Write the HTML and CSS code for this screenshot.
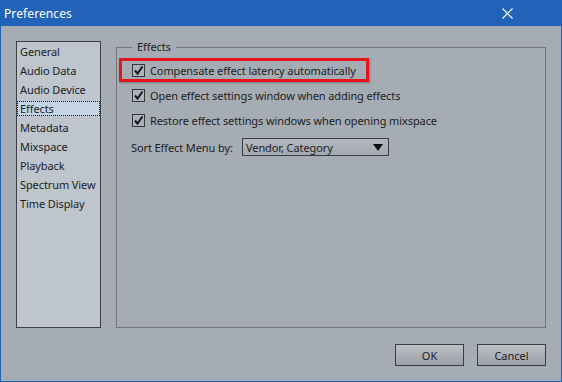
FILE: index.html
```html
<!DOCTYPE html>
<html lang="en">
<head>
  <meta charset="UTF-8" />
  <title>Preferences</title>
  <link rel="stylesheet" href="styles.css">
</head>
<body>
  <div class="window">
    <!-- Title bar -->
    <div class="titlebar">
      <span class="title">Preferences</span>
      <svg class="close" width="11" height="11" viewBox="0 0 11 11">
        <path d="M0.5 0.5 L10.5 10.5 M10.5 0.5 L0.5 10.5" stroke="#fff" stroke-width="1.2" fill="none" />
      </svg>
    </div>

    <div class="dialog">
      <div class="panes">
        <!-- Page list -->
        <ul class="page-list">
          <li>General</li>
          <li>Audio Data</li>
          <li>Audio Device</li>
          <li class="selected">Effects</li>
          <li>Metadata</li>
          <li>Mixspace</li>
          <li>Playback</li>
          <li>Spectrum View</li>
          <li>Time Display</li>
        </ul>

        <!-- Effects group -->
        <fieldset class="group">
          <legend>Effects</legend>
          <div class="options">
            <label class="option">
              <span class="check"><svg width="11" height="11" viewBox="0 0 11 11"><path d="M2 5.5 L4.5 8.5 L9.5 1.5" stroke="#15171b" stroke-width="2" fill="none" /></svg></span>
              Compensate effect latency automatically
              <span class="highlight"></span>
            </label>
            <label class="option">
              <span class="check"><svg width="11" height="11" viewBox="0 0 11 11"><path d="M2 5.5 L4.5 8.5 L9.5 1.5" stroke="#15171b" stroke-width="2" fill="none" /></svg></span>
              Open effect settings window when adding effects
            </label>
            <label class="option">
              <span class="check"><svg width="11" height="11" viewBox="0 0 11 11"><path d="M2 5.5 L4.5 8.5 L9.5 1.5" stroke="#15171b" stroke-width="2" fill="none" /></svg></span>
              Restore effect settings windows when opening mixspace
            </label>
          </div>
          <div class="sort-row">
            <span class="sort-label">Sort Effect Menu by:</span>
            <div class="select">
              <span>Vendor, Category</span>
              <svg width="10" height="7" viewBox="0 0 10 7"><path d="M0 0 H10 L5 7 Z" fill="#0d0f12" /></svg>
            </div>
          </div>
        </fieldset>
      </div>

      <!-- Dialog buttons -->
      <div class="buttons">
        <button class="btn">OK</button>
        <button class="btn">Cancel</button>
      </div>
    </div>
  </div>
</body>
</html>
```

FILE: styles.css
```css
body {
  margin: 0;
  font-family: 'Noto Sans', 'DejaVu Sans', sans-serif;
  font-size: 11px;
  letter-spacing: -0.1px;
  color: #1c1d24;
}

/* Window frame */
.window {
  width: 562px;
  height: 382px;
  background: #2163b8;
  display: flex;
  flex-direction: column;
}

.titlebar {
  height: 26px;
  display: flex;
  align-items: center;
  justify-content: space-between;
  padding-left: 4px;
  color: #fff;
}

.title {
  font-size: 12px;
  letter-spacing: 0.1px;
}

.close {
  margin-right: 49px;
}

.dialog {
  flex: 1;
  margin: 0 1px 1px;
  background: #a6acb3;
  padding: 15px 15px 15px;
  display: flex;
  flex-direction: column;
  gap: 16px;
}

.panes {
  height: 287px;
  display: flex;
  gap: 15px;
}

/* Page list */
.page-list {
  list-style: none;
  margin: 0;
  padding: 2px 0 0;
  width: 85px;
  box-sizing: border-box;
  border: 1px solid #3c4046;
  background: #bfc5cc;
}

.page-list li {
  height: 15px;
  line-height: 14px;
  margin-bottom: 4px;
  padding-left: 2px;
  border: 1px solid transparent;
  box-sizing: border-box;
  white-space: nowrap;
}

.page-list li.selected {
  background: #c6d5e6;
  border: 1px dotted #111;
}

/* Group box */
.group {
  flex: 1;
  margin: 0;
  padding: 0 0 0 15px;
  min-width: 0;
  border: 1px solid #72767c;
}

.group legend {
  padding: 0 5px;
  line-height: 12px;
}

.options {
  margin-top: 5px;
}

.option {
  position: relative;
  height: 25px;
  display: flex;
  align-items: center;
  gap: 5px;
  white-space: nowrap;
}

.check {
  width: 13px;
  height: 13px;
  box-sizing: border-box;
  border: 1px solid #33373c;
  background: #adb3ba;
  display: flex;
  align-items: center;
  justify-content: center;
}

/* red annotation round the first option */
.highlight {
  position: absolute;
  left: -13px;
  top: 0;
  width: 250px;
  height: 24px;
  box-sizing: border-box;
  border: 3px solid #e3141b;
  box-shadow: 1px 1px 2px rgba(0, 0, 0, 0.3);
}

.sort-row {
  display: flex;
  align-items: center;
  margin-top: 5px;
  margin-left: -1px;
}

.sort-label {
  width: 111px;
  white-space: nowrap;
}

.select {
  width: 147px;
  height: 18px;
  box-sizing: border-box;
  border: 1px solid #3a3e44;
  background: linear-gradient(#b2b7bd, #a4aab1);
  display: flex;
  align-items: center;
  justify-content: space-between;
  padding: 0 5px 0 3px;
}

/* Buttons */
.buttons {
  display: flex;
  justify-content: flex-end;
  gap: 13px;
}

.btn {
  width: 69px;
  height: 22px;
  font-family: inherit;
  font-size: 11px;
  color: #1c1d24;
  border: 1px solid #3a3e43;
  background: linear-gradient(#bac0c6, #9ba1a8);
  padding: 0;
}
```
